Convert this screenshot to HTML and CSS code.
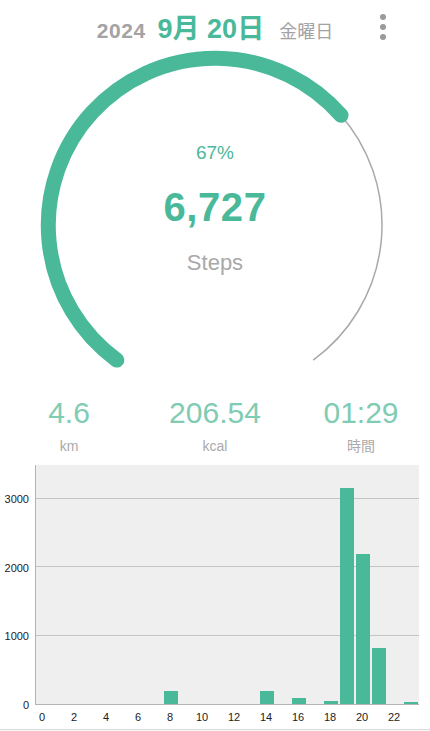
FILE: index.html
```html
<!DOCTYPE html>
<html lang="ja">
<head>
    <meta charset="utf-8">
    <title>Steps</title>
    <link rel="stylesheet" href="styles.css">
</head>
<body>
  <div class="app">
    <header class="topbar">
        <div class="date">
            <span class="year">2024</span>
            <span class="day">9月 20日</span>
            <span class="weekday">金曜日</span>
        </div>
        <button class="menu" aria-label="menu">
            <span></span><span></span><span></span>
        </button>
    </header>

    <section class="gauge">
        <svg class="ring" viewBox="0 0 430 330" width="430" height="330">
            <path d="M116.8 310.1 A167 167 0 1 1 313.2 310.1" fill="none" stroke="#a9a9a9" stroke-width="1.5"/>
            <path d="M116.8 310.1 A167 167 0 1 1 341 65.3" fill="none" stroke="#49b99a" stroke-width="15" stroke-linecap="round"/>
        </svg>
        <div class="percent">67%</div>
        <div class="count">6,727</div>
        <div class="unit">Steps</div>
    </section>

    <section class="stats">
        <div class="stat">
            <div class="value">4.6</div>
            <div class="label">km</div>
        </div>
        <div class="stat">
            <div class="value">206.54</div>
            <div class="label">kcal</div>
        </div>
        <div class="stat">
            <div class="value">01:29</div>
            <div class="label">時間</div>
        </div>
    </section>

    <section class="chart">
        <div class="y-axis">
            <span style="bottom: 85.714%">3000</span>
            <span style="bottom: 57.143%">2000</span>
            <span style="bottom: 28.571%">1000</span>
            <span style="bottom: 0%">0</span>
        </div>
        <div class="plot">
            <div class="grid-line" style="bottom: 85.714%"></div>
            <div class="grid-line" style="bottom: 57.143%"></div>
            <div class="grid-line" style="bottom: 28.571%"></div>
            <div class="bars" id="bars"></div>
        </div>
        <div class="x-axis" id="xAxis"></div>
    </section>

    <div class="tabbar"></div>
  </div>
  <script>
    // steps per hour
    const hours=[0,0,0,0,0,0,0,0,190,0,0,0,0,0,185,0,90,0,45,3165,2200,825,0,27];
    const max=3500;
    const bars=document.getElementById("bars");
    const xAxis=document.getElementById("xAxis");
    hours.forEach((v,i)=>{
        const cell=document.createElement("div");
        cell.className="cell";
        if(v>0){
            const bar=document.createElement("div");
            bar.className="bar";
            bar.style.height=(v/max*100)+"%";
            cell.appendChild(bar);
        }
        bars.appendChild(cell);

        const tick=document.createElement("span");
        tick.textContent=i%2===0 ? i : "";
        xAxis.appendChild(tick);
    });
  </script>
</body>
</html>
```

FILE: styles.css
```css
*{
    box-sizing: border-box;
}
body{
    margin: 0;
    padding: 0;
    background: #fff;
    font-family: "Liberation Sans", "Noto Sans CJK JP", sans-serif;
    color: #a8a8a8;
}
.app{
    width: 430px;
    height: 731px;
    overflow: hidden;
    display: flex;
    flex-direction: column;
}
/* header */
.topbar{
    height: 50px;
    display: grid;
    grid-template-columns: 1fr auto 1fr;
    align-items: center;
    padding: 0 44px 0 0;
}
.date{
    grid-column: 2;
    display: flex;
    align-items: baseline;
    gap: 12px;
    padding: 3px 0 0 44px;
}
.year{
    font-size: 21px;
    font-weight: bold;
    letter-spacing: 0.5px;
    color: #a3a3a3;
}
.day{
    font-size: 27px;
    font-weight: bold;
    color: #49b99a;
}
.weekday{
    font-size: 18px;
    color: #a3a3a3;
    font-family: "Noto Sans CJK JP", sans-serif;
    margin-left: 3px;
}
.menu{
    grid-column: 3;
    justify-self: end;
    border: none;
    background: none;
    padding: 0;
    display: flex;
    flex-direction: column;
    gap: 3.7px;
    margin-top: 4px;
}
.menu span{
    width: 6px;
    height: 6px;
    border-radius: 50%;
    background: #9a9a9a;
}
/* gauge */
.gauge{
    position: relative;
    height: 330px;
    display: flex;
    flex-direction: column;
    align-items: center;
    padding-top: 91px;
}
.ring{
    position: absolute;
    top: 0;
    left: 0;
}
.percent{
    font-size: 19px;
    color: #4cb899;
    line-height: 24px;
}
.count{
    margin-top: 20px;
    font-size: 40px;
    font-weight: bold;
    letter-spacing: 0.6px;
    color: #49b99a;
    line-height: 44px;
}
.unit{
    margin-top: 21px;
    font-size: 22px;
    color: #a9a9a9;
    line-height: 26px;
}
/* stats */
.stats{
    display: grid;
    grid-template-columns: 146px 146px 146px;
    justify-content: center;
    margin-top: 16px;
}
.stat{
    text-align: center;
}
.value{
    font-size: 30px;
    color: #80ccb3;
    line-height: 34px;
}
.label{
    margin-top: 7px;
    font-size: 14px;
    color: #aaa;
    line-height: 18px;
}
/* chart */
.chart{
    display: grid;
    grid-template-columns: 35px 384px;
    grid-template-rows: 240px 22px;
    margin-top: 10px;
}
.y-axis{
    position: relative;
}
.y-axis span{
    position: absolute;
    right: 6px;
    transform: translateY(50%);
    font-size: 11px;
    color: #222;
}
.plot{
    position: relative;
    background: #efefef;
    border-left: 1px solid #b4b4b4;
    border-bottom: 1px solid #b4b4b4;
}
.grid-line{
    position: absolute;
    left: 0;
    right: 0;
    height: 1px;
    background: #c4c4c4;
}
.bars{
    position: absolute;
    inset: 0 0 0 -1px;
    display: flex;
}
.cell{
    width: 16px;
    height: 100%;
    display: flex;
    align-items: flex-end;
    justify-content: center;
}
.bar{
    width: 13.6px;
    background: #49b99a;
}
.x-axis{
    grid-column: 2;
    display: flex;
    margin-left: -1px;
}
.x-axis span{
    width: 16px;
    text-align: center;
    font-size: 11px;
    color: #222;
    line-height: 24px;
}
.tabbar{
    margin-top: 2px;
    flex: 1;
    border-top: 1px solid #dcdce0;
    background: #f6f6f8;
}
```
